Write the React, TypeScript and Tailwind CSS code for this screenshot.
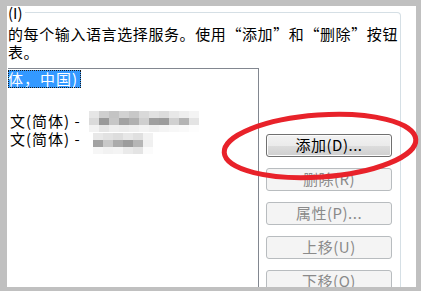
import React from 'react';

const font = { fontFamily: '"Noto Sans CJK SC", "Noto Sans", sans-serif' };

// pixelated (mosaic) blur that hides the IME names
const mosaicA = [
  ['#e6e6e6', '#cfcfcf', '#c4c4c4', '#d2d2d2', '#c8c8c8', '#d9d9d9', '#e2e2e2', '#dcdcdc', '#e8e8e8', '#eeeeee', '#f4f4f4'],
  ['#dadada', '#9a9a9a', '#c6c6c6', '#a2a2a2', '#b0b0b0', '#cfcfcf', '#a0a0a0', '#9c9c9c', '#d0d0d0', '#b4b4b4', '#e4e4e4'],
  ['#f2f2f2', '#e6e6e6', '#eeeeee', '#ececec', '#efefef', '#f3f3f3', '#f0f0f0', '#f4f4f4', '#f7f7f7', '#f9f9f9', '#fdfdfd'],
];
const mosaicB = [
  ['#e8e8e8', '#e2e2e2', '#dddddd', '#e7e7e7', '#e0e0e0', '#f2f2f2'],
  ['#a2a2a2', '#c8c8c8', '#ababab', '#9c9c9c', '#b6b6b6', '#f0f0f0'],
  ['#f6f6f6', '#f2f2f2', '#f4f4f4', '#eaeaea', '#e4e4e4', '#fbfbfb'],
];

function Mosaic({ rows }: { rows: string[][] }) {
  return (
    <div className="flex flex-col blur-[0.6px]">
      {rows.map((r, i) => (
        <div key={i} className="flex">
          {r.map((c, j) => (
            <span key={j} className="block w-[10px] h-[7px]" style={{ background: c }} />
          ))}
        </div>
      ))}
    </div>
  );
}

function Btn({ label, enabled }: { label: string; enabled?: boolean }) {
  return (
    <div
      className={
        enabled
          ? 'h-[23px] w-[126px] rounded-[3px] border border-[#707070] bg-[linear-gradient(#f2f2f2_0%,#ebebeb_50%,#dddddd_50%,#cfcfcf_100%)] flex items-center justify-center text-[15px] tracking-[0.5px] text-black shadow-[inset_0_0_0_1px_#fcfcfc]'
          : 'h-[23px] w-[126px] rounded-[3px] border border-[#b8bcbf] bg-[#f4f4f4] flex items-center justify-center text-[15px] tracking-[0.5px] text-[#8a8a8a]'
      }
    >
      {label}
    </div>
  );
}

export default function App() {
  return (
    <div className="relative w-[421px] h-[291px] overflow-hidden bg-[#c0c0c0] pt-[6px] pl-[7px] pr-[5px] pb-[4px]" style={font}>
      <div className="h-full bg-white pl-[1px] pr-[15px] overflow-hidden">
        <fieldset className="h-[290px] border border-l-0 border-b-0 border-[#d5dfe5] rounded-tr-[4px] m-0 p-0 min-w-0">
          <legend className="px-0 pr-[2px] text-[15px] leading-[13px] text-black">(I)</legend>
          <p className="mt-[6px] text-[15px] leading-[18px] text-black whitespace-nowrap tracking-[0.6px]">
            的每个输入语言选择服务。使用“添加”和“删除”按钮
            <br />
            表。
          </p>
          <div className="mt-[7px] flex gap-[7px]">
            <div className="w-[251px] h-[230px] border-t border-r border-[#828790] text-[15px] leading-[18px] text-black">
              <div className="pt-[1px]">
                <span className="inline-block bg-[#3399ff] text-white pr-[3px] outline outline-1 outline-dotted outline-[#1a1a1a] -outline-offset-1 tracking-[1px]">体，中国)</span>
              </div>
              <div className="mt-[24px] flex items-center h-[18px] pl-[2px] tracking-[1px]">
                <span>文(简体) -</span>
                <div className="ml-[8px]"><Mosaic rows={mosaicA} /></div>
              </div>
              <div className="flex items-start h-[18px] pl-[2px] tracking-[1px]">
                <span>文(简体) -</span>
                <div className="ml-[12px] mt-[3px]"><Mosaic rows={mosaicB} /></div>
              </div>
            </div>
            <div className="mt-[66px] flex flex-col gap-[11px]">
              <Btn label="添加(D)..." enabled />
              <Btn label="删除(R)" />
              <Btn label="属性(P)..." />
              <Btn label="上移(U)" />
              <Btn label="下移(O)" />
            </div>
          </div>
        </fieldset>
      </div>
      {/* hand-drawn red ellipse */}
      <svg className="absolute left-0 top-0 pointer-events-none" width="421" height="291" viewBox="0 0 421 291">
        <ellipse cx="320" cy="146" rx="96" ry="31" fill="none" stroke="#e8222a" strokeWidth="5" transform="rotate(-4 320 146)" />
      </svg>
    </div>
  );
}
